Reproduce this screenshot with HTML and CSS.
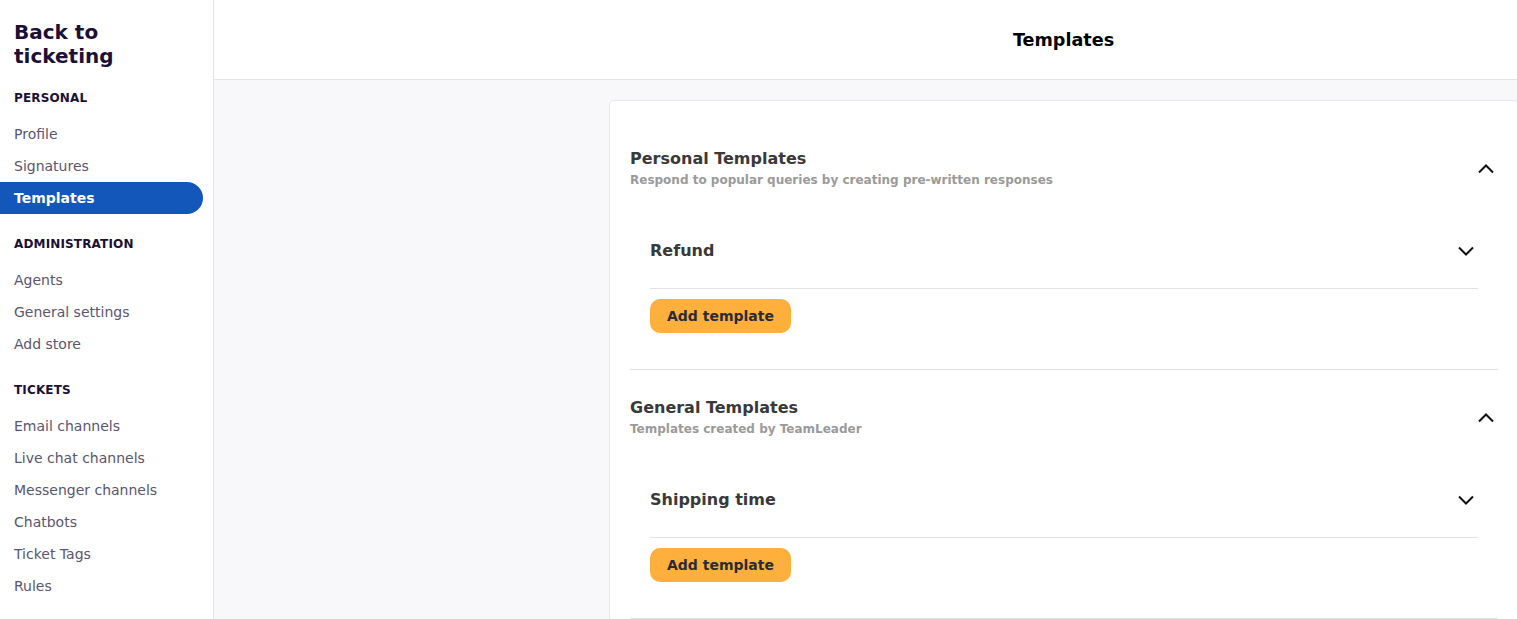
FILE: index.html
```html
<!DOCTYPE html>
<html lang="en">
<head>
    <meta charset="UTF-8">
    <meta name="viewport" content="width=device-width, initial-scale=1.0">
    <title>Templates</title>
    <link rel="stylesheet" href="styles.css">
</head>
<body>
    <div class="app">
        <aside class="sidebar">
            <a class="back-link" href="#">Back to ticketing</a>

            <div class="nav-label">Personal</div>
            <nav class="nav">
                <a href="#" class="nav-item">Profile</a>
                <a href="#" class="nav-item">Signatures</a>
                <a href="#" class="nav-item active">Templates</a>
            </nav>

            <div class="nav-label">Administration</div>
            <nav class="nav">
                <a href="#" class="nav-item">Agents</a>
                <a href="#" class="nav-item">General settings</a>
                <a href="#" class="nav-item">Add store</a>
            </nav>

            <div class="nav-label">Tickets</div>
            <nav class="nav">
                <a href="#" class="nav-item">Email channels</a>
                <a href="#" class="nav-item">Live chat channels</a>
                <a href="#" class="nav-item">Messenger channels</a>
                <a href="#" class="nav-item">Chatbots</a>
                <a href="#" class="nav-item">Ticket Tags</a>
                <a href="#" class="nav-item">Rules</a>
            </nav>
        </aside>

        <main class="main">
            <header class="topbar">
                <div></div>
                <h1 class="page-title">Templates</h1>
            </header>

            <div class="content">
                <div></div>
                <div class="card">
                    <section class="group">
                        <div class="group-head">
                            <div>
                                <h2 class="group-title">Personal Templates</h2>
                                <p class="group-sub">Respond to popular queries by creating pre-written responses</p>
                            </div>
                            <button class="chevron" type="button">
                                <svg viewBox="0 0 24 24" width="24" height="24"><path d="M5 15.5l7-7 7 7"/></svg>
                            </button>
                        </div>
                        <div class="template-row">
                            <span class="template-name">Refund</span>
                            <button class="chevron" type="button">
                                <svg viewBox="0 0 24 24" width="24" height="24"><path d="M5 8.5l7 7 7-7"/></svg>
                            </button>
                        </div>
                        <button class="add-btn" type="button">Add template</button>
                    </section>

                    <section class="group">
                        <div class="group-head">
                            <div>
                                <h2 class="group-title">General Templates</h2>
                                <p class="group-sub">Templates created by TeamLeader</p>
                            </div>
                            <button class="chevron" type="button">
                                <svg viewBox="0 0 24 24" width="24" height="24"><path d="M5 15.5l7-7 7 7"/></svg>
                            </button>
                        </div>
                        <div class="template-row">
                            <span class="template-name">Shipping time</span>
                            <button class="chevron" type="button">
                                <svg viewBox="0 0 24 24" width="24" height="24"><path d="M5 8.5l7 7 7-7"/></svg>
                            </button>
                        </div>
                        <button class="add-btn" type="button">Add template</button>
                    </section>
                </div>
            </div>
        </main>
    </div>
</body>
</html>
```

FILE: styles.css
```css
* {
    box-sizing: border-box;
}
body {
    margin: 0;
    font-family: "DejaVu Sans", sans-serif;
    background-color: #f8f7fa;
    overflow: hidden;
}
a {
    text-decoration: none;
}
.app {
    display: flex;
    min-height: 100vh;
}
.sidebar {
    width: 214px;
    flex-shrink: 0;
    background-color: #fff;
    border-right: 1px solid #e4e4e7;
    padding: 20px 0 20px 0;
}
.back-link {
    display: block;
    padding: 0 14px;
    font-size: 20px;
    font-weight: bold;
    line-height: 24px;
    color: #1b1035;
}
.nav-label {
    margin: 22px 0 12px;
    padding: 0 14px;
    font-size: 12px;
    font-weight: bold;
    line-height: 16px;
    letter-spacing: 0.15px;
    text-transform: uppercase;
    color: #1b1035;
}
.nav {
    display: flex;
    flex-direction: column;
}
.nav-item {
    display: block;
    height: 32px;
    line-height: 32px;
    padding: 0 14px;
    margin-right: 10px;
    font-size: 14px;
    color: #5a5570;
}
.nav-item.active {
    background-color: #1457bb;
    color: #fff;
    font-weight: bold;
    border-radius: 0 16px 16px 0;
}
.main {
    flex: 1;
    display: flex;
    flex-direction: column;
}
.topbar,
.content {
    display: grid;
    grid-template-columns: 395px 909px;
}
.topbar {
    height: 80px;
    background-color: #fff;
    border-bottom: 1px solid #e4e4e7;
    align-items: center;
}
.page-title {
    margin: 0;
    text-align: center;
    font-size: 17.6px;
    font-weight: bold;
    color: #000;
}
.content {
    padding-top: 20px;
}
.card {
    background-color: #fff;
    border: 1px solid #e8e8ec;
    border-radius: 5px;
    padding: 0 19px 20px 20px;
    min-height: 560px;
}
.group {
    padding: 28px 0 36px;
    border-bottom: 1px solid #e2e2e2;
}
.group:first-child {
    padding-top: 48px;
}
.group-head {
    display: flex;
    align-items: center;
    justify-content: space-between;
}
.group-title {
    margin: 0;
    font-size: 16px;
    font-weight: bold;
    line-height: 20px;
    color: #393939;
}
.group-sub {
    margin: 3px 0 0;
    font-size: 12px;
    font-weight: bold;
    line-height: 16px;
    color: #9a9a9a;
}
.chevron {
    width: 24px;
    height: 24px;
    padding: 0;
    border: none;
    background: none;
    display: flex;
}
.chevron path {
    fill: none;
    stroke: #111;
    stroke-width: 2;
}
.template-row {
    display: flex;
    align-items: center;
    justify-content: space-between;
    margin: 24px 20px 0;
    padding: 29px 0 27px;
    height: 77px;
    border-bottom: 1px solid #e2e2e2;
}
.template-name {
    font-size: 16px;
    font-weight: bold;
    line-height: 20px;
    color: #393939;
}
.add-btn {
    margin: 10px 0 0 20px;
    height: 34px;
    padding: 0 17px;
    border: none;
    border-radius: 10px;
    background-color: #ffb03c;
    font-family: "DejaVu Sans", sans-serif;
    font-size: 14px;
    font-weight: bold;
    color: #2b2a35;
}
```
